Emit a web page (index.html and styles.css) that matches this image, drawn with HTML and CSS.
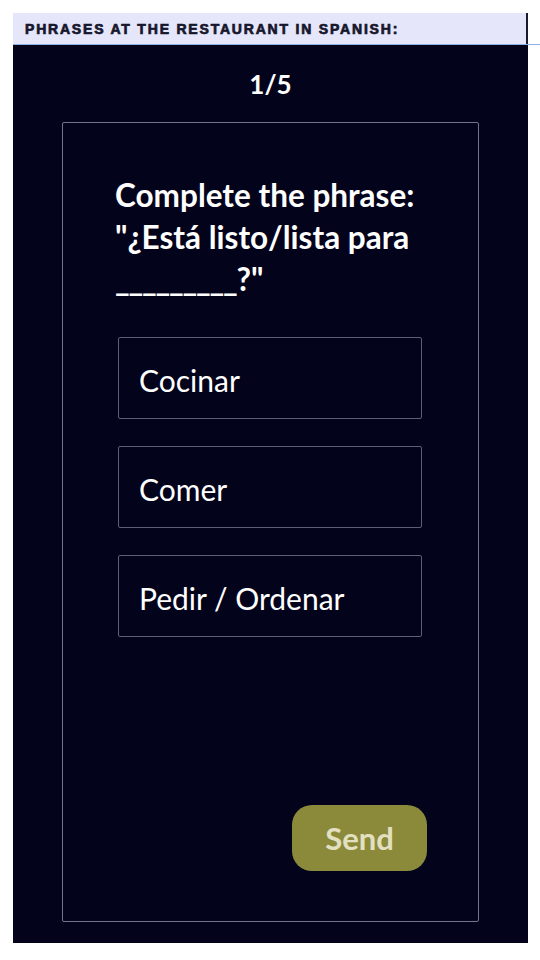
FILE: index.html
```html
<!DOCTYPE html>
<html lang="en">
<head>
    <meta charset="UTF-8">
    <meta name="viewport" content="width=device-width, initial-scale=1.0">
    <title>Restaurant Phrases Quiz</title>
    <link rel="stylesheet" href="styles.css">
</head>
<body>
    <header class="topbar">
        <h1 class="topbar-title">PHRASES AT THE RESTAURANT IN SPANISH:</h1>
    </header>

    <main class="quiz">
        <div class="counter">1/5</div>

        <section class="card">
            <h2 class="question">Complete the phrase: "¿Está listo/lista para <span class="blank">_________</span>?"</h2>

            <ul class="options">
                <li class="option">Cocinar</li>
                <li class="option">Comer</li>
                <li class="option">Pedir / Ordenar</li>
            </ul>

            <button class="send" type="button">Send</button>
        </section>
    </main>
</body>
</html>
```

FILE: styles.css
```css
* {
    margin: 0;
    padding: 0;
    box-sizing: border-box;
}

body {
    padding: 13px 0 0 13px;
    background-color: #fff;
    font-family: Lato, "Noto Sans", sans-serif;
}

.topbar {
    display: flex;
    border-bottom: 1px solid #8fb0e6;
}

.topbar-title {
    width: 515px;
    height: 31px;
    padding: 9px 0 0 12px;
    background-color: #e6e6fa;
    border-right: 2px solid #1a1a2e;
    font-family: "Liberation Sans", Arial, sans-serif;
    font-size: 14px;
    font-weight: bold;
    letter-spacing: 1.8px;
    -webkit-text-stroke: 0.7px #16162c;
    color: #16162c;
    line-height: 14px;
}

.quiz {
    width: 515px;
    height: 898px;
    padding: 0 49px;
    background-color: #03031b;
    color: #fff;
}

.counter {
    height: 77px;
    padding-top: 24px;
    text-align: center;
    font-size: 26px;
    font-weight: bold;
    line-height: 30px;
}

.card {
    display: flex;
    flex-direction: column;
    height: 800px;
    padding: 51px 0 50px;
    border: 1px solid #74748a;
    border-radius: 2px;
}

.question {
    margin-left: 52px;
    margin-right: 44px;
    font-size: 31.5px;
    font-weight: bold;
    line-height: 42px;
}

/* close the tiny gaps between the underscores */
.blank {
    letter-spacing: -1.2px;
}

.options {
    list-style-type: none;
    display: flex;
    flex-direction: column;
    gap: 27px;
    width: 304px;
    margin: 37px 0 0 55px;
}

.option {
    height: 82px;
    padding: 4px 20px 0;
    display: flex;
    align-items: center;
    border: 1px solid #5e5e76;
    border-radius: 2px;
    font-size: 30px;
    line-height: 34px;
}

.send {
    margin: auto 51px 0 auto;
    width: 135px;
    height: 66px;
    background-color: #8b8a3b;
    color: #e2e0c0;
    border: none;
    border-radius: 20px;
    font-family: Lato, "Noto Sans", sans-serif;
    font-size: 31px;
    font-weight: bold;
    cursor: pointer;
}
```
